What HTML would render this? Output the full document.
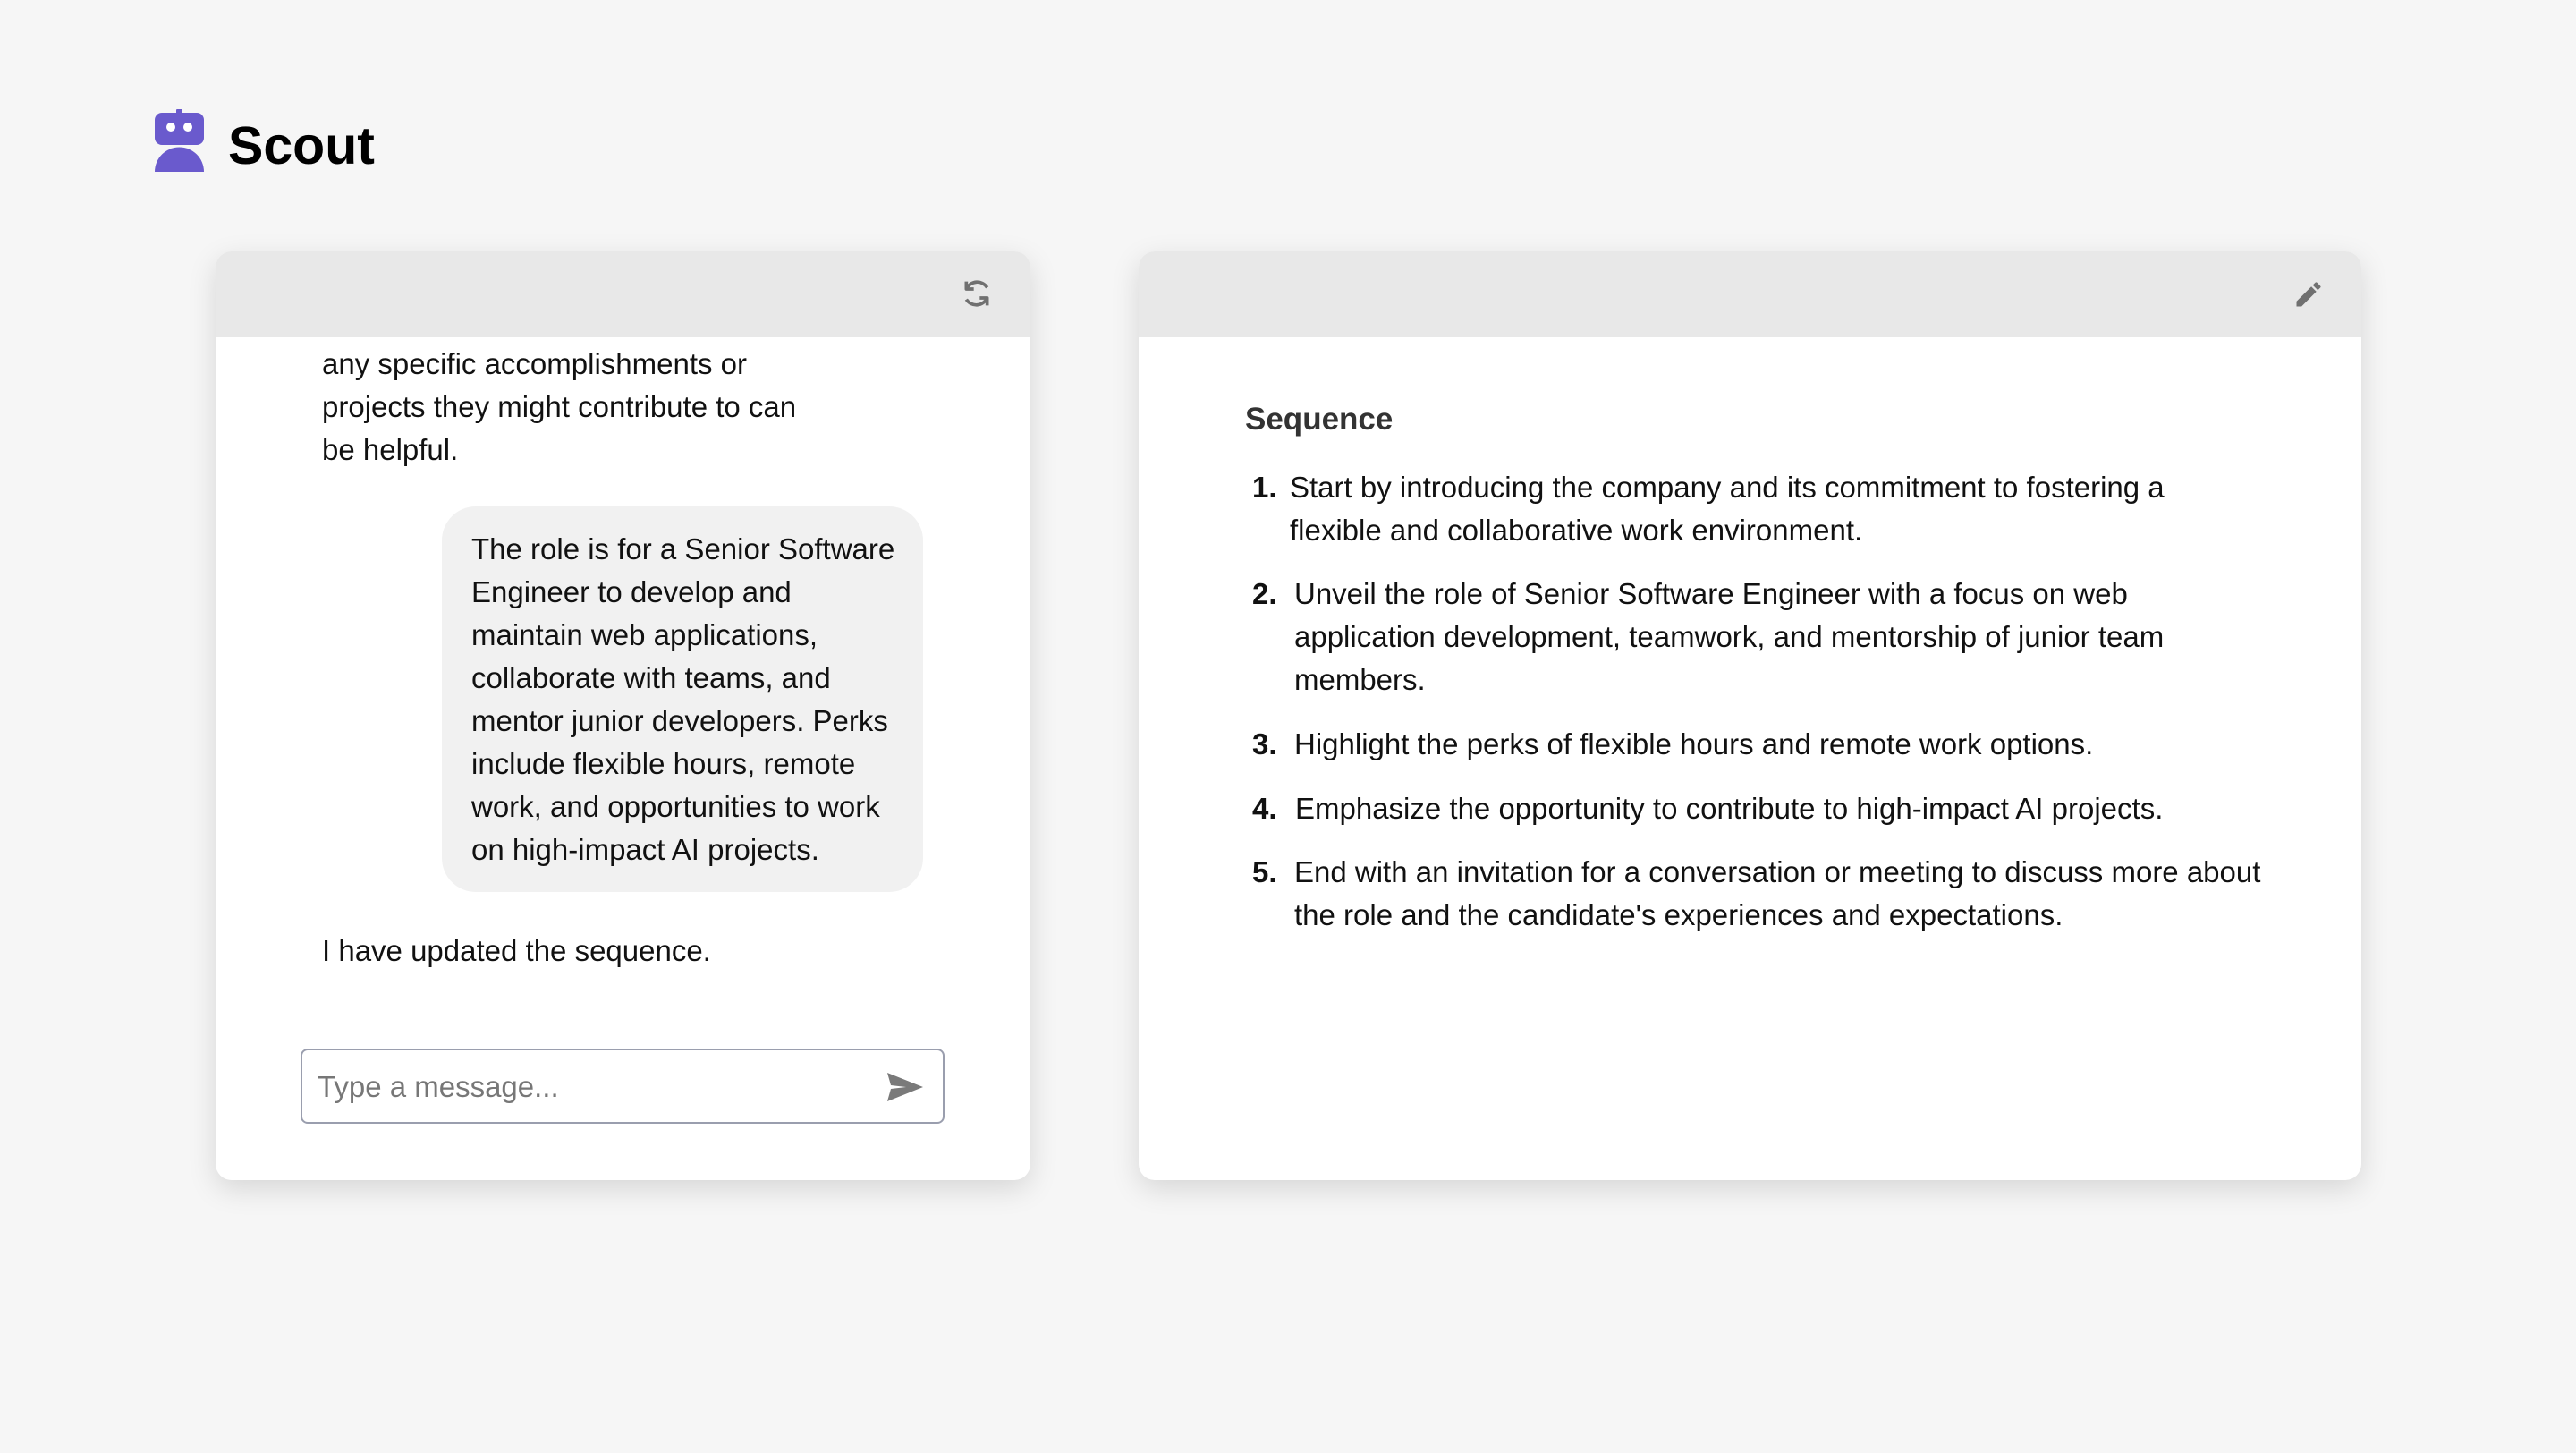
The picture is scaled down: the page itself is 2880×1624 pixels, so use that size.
<!DOCTYPE html>
<html><head><meta charset="utf-8"><style>
*{margin:0;padding:0;box-sizing:border-box}
body{width:2880px;height:1624px;background:#f6f6f6;font-family:"Liberation Sans",sans-serif;color:#111;position:relative;overflow:hidden}
.abs{position:absolute}
.card{position:absolute;background:#fff;border-radius:18px;box-shadow:0 10px 32px rgba(0,0,0,0.13);overflow:hidden;top:281px;height:1038px}
.hdr{position:absolute;left:0;right:0;top:0;height:96px;background:#e8e8e8}
.t{position:absolute;font-size:33px;line-height:48px;white-space:nowrap}
</style></head><body>
<svg class="abs" style="left:172px;top:122px" width="58" height="72" viewBox="0 0 58 72">
<rect x="25" y="0" width="7" height="6" rx="1" fill="#6a5acd"/>
<rect x="1" y="4" width="55" height="36" rx="8" fill="#6a5acd"/>
<circle cx="19" cy="20" r="5" fill="#fff"/><circle cx="38" cy="20" r="5" fill="#fff"/>
<path d="M1 70 A27 27 0 0 1 56 70 Z" fill="#6a5acd"/>
</svg>
<div class="abs" style="left:255px;top:123px;font-size:59px;font-weight:bold;line-height:80px;color:#000">Scout</div>

<div class="card" style="left:241px;width:911px">
<div class="hdr"></div>
<svg class="abs" style="left:831px;top:27px" width="40" height="40" viewBox="0 0 24 24" fill="none" stroke="#707070" stroke-width="2.2">
<path d="M19 8A8 8 0 0 0 5 9"/><path d="M5 4v5h5" stroke-linejoin="round"/>
<path d="M5 16a8 8 0 0 0 14-1"/><path d="M19 20v-5h-5" stroke-linejoin="round"/>
</svg>
<div class="t" style="left:119px;top:102px">any specific accomplishments or<br>projects they might contribute to can<br>be helpful.</div>
<div class="abs" style="left:253px;top:285px;width:538px;height:431px;background:#f1f1f1;border-radius:38px"></div>
<div class="t" style="left:286px;top:309px">The role is for a Senior Software<br>Engineer to develop and<br>maintain web applications,<br>collaborate with teams, and<br>mentor junior developers. Perks<br>include flexible hours, remote<br>work, and opportunities to work<br>on high-impact AI projects.</div>
<div class="t" style="left:119px;top:758px">I have updated the sequence.</div>
<div class="abs" style="left:95px;top:891px;width:720px;height:84px;border:2px solid #9a9eae;border-radius:8px"></div>
<div class="t" style="left:114px;top:910px;color:#777">Type a message...</div>
<svg class="abs" style="left:750px;top:917px" width="42" height="34" viewBox="0 0 42 34"><path d="M1 1L41 17L1 33L5 19L22 17L5 15Z" fill="#7a7a7a"/></svg>
</div>

<div class="card" style="left:1273px;width:1367px">
<div class="hdr"></div>
<svg class="abs" style="left:1290px;top:30px" width="36" height="36" viewBox="0 0 24 24"><path d="M3 17.25V21h3.75L17.8 9.94l-3.75-3.75L3 17.25zM20.7 7.04a1 1 0 0 0 0-1.41l-2.34-2.34a1 1 0 0 0-1.41 0l-1.83 1.83 3.75 3.75 1.83-1.83z" fill="#707070"/></svg>
<div class="t" style="left:119px;top:164px;font-weight:bold;font-size:35px;color:#333">Sequence</div>
<div class="t" style="left:127px;top:240px;font-weight:bold">1.</div>
<div class="t" style="left:169px;top:240px">Start by introducing the company and its commitment to fostering a<br>flexible and collaborative work environment.</div>
<div class="t" style="left:127px;top:359px;font-weight:bold">2.</div>
<div class="t" style="left:174px;top:359px">Unveil the role of Senior Software Engineer with a focus on web<br>application development, teamwork, and mentorship of junior team<br>members.</div>
<div class="t" style="left:127px;top:527px;font-weight:bold">3.</div>
<div class="t" style="left:174px;top:527px">Highlight the perks of flexible hours and remote work options.</div>
<div class="t" style="left:127px;top:599px;font-weight:bold">4.</div>
<div class="t" style="left:175px;top:599px">Emphasize the opportunity to contribute to high-impact AI projects.</div>
<div class="t" style="left:127px;top:670px;font-weight:bold">5.</div>
<div class="t" style="left:174px;top:670px">End with an invitation for a conversation or meeting to discuss more about<br>the role and the candidate's experiences and expectations.</div>
</div>
</body></html>
